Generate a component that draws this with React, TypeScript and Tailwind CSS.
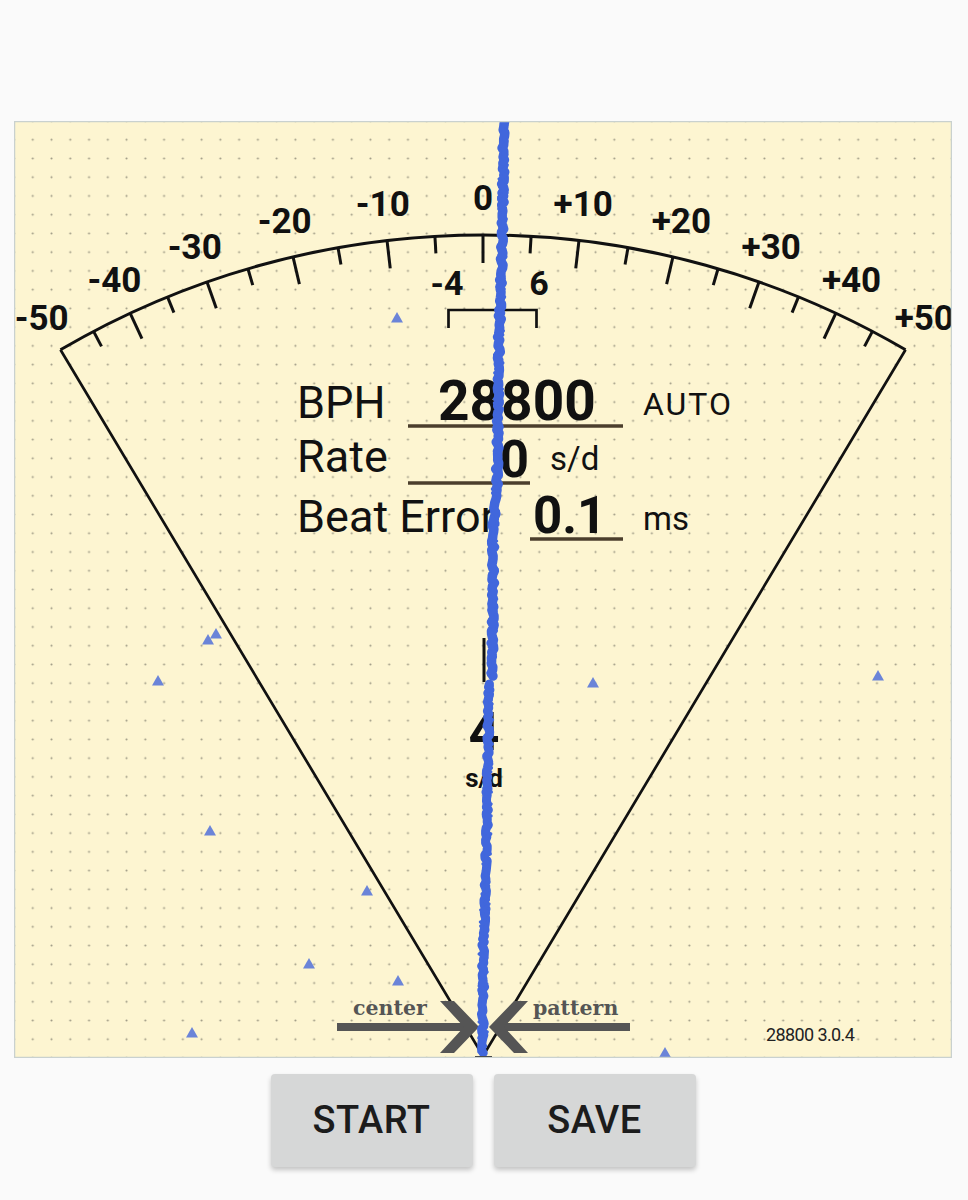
import React from "react";

const CX = 483;
const CY = 1070;
const R = 835;
const RL = 872;
const ANG = [0, 3.3, 6.6, 10.0, 13.15, 16.35, 19.3, 22.2, 25.0, 27.8, 30.4];

function pt(sign: number, deg: number, r: number) {
  const t = (deg * Math.PI) / 180;
  return { x: CX + sign * r * Math.sin(t), y: CY - r * Math.cos(t) };
}

function rnd(i: number) {
  const v = Math.sin(i * 12.9898 + 78.233) * 43758.5453;
  return v - Math.floor(v);
}

const BASE: [number, number][] = [
  [121, 504],
  [250, 502],
  [340, 499],
  [420, 498],
  [480, 497],
  [540, 493],
  [600, 493],
  [676, 492],
  [681, 489],
  [760, 488],
  [820, 487],
  [900, 485],
  [960, 483],
  [1056, 483],
];

function baseX(y: number) {
  for (let i = 0; i < BASE.length - 1; i++) {
    const [y0, x0] = BASE[i];
    const [y1, x1] = BASE[i + 1];
    if (y >= y0 && y <= y1) {
      const t = (y - y0) / (y1 - y0 || 1);
      return x0 + (x1 - x0) * t;
    }
  }
  return 483;
}

function tracePath(y0: number, y1: number, seed: number, amp: number, step: number) {
  let d = "";
  let i = 0;
  for (let y = y0; y <= y1; y += step) {
    const x = baseX(y) + (rnd(i + seed) - 0.5) * amp;
    d += (i === 0 ? "M" : "L") + x.toFixed(1) + " " + y.toFixed(1) + " ";
    i++;
  }
  return d;
}

const TRIS: [number, number][] = [
  [397, 318],
  [208, 640],
  [216, 634],
  [158, 681],
  [593, 683],
  [878, 676],
  [210, 831],
  [367, 891],
  [309, 964],
  [398, 981],
  [192, 1033],
  [665, 1053],
];

function Gauge() {
  const ticks: { x1: number; y1: number; x2: number; y2: number }[] = [];
  for (const s of [-1, 1]) {
    for (let k = s < 0 ? 0 : 1; k <= 9; k++) {
      const len = k % 2 === 0 ? 28 : 17;
      const a = pt(s, ANG[k], R);
      const b = pt(s, ANG[k], R - len);
      ticks.push({ x1: a.x, y1: a.y, x2: b.x, y2: b.y });
    }
  }
  const labels: { x: number; y: number; t: string }[] = [];
  labels.push({ ...pt(1, 0, RL), t: "0" });
  for (let k = 2; k <= 10; k += 2) {
    const l = pt(-1, ANG[k], RL);
    const r = pt(1, ANG[k], RL);
    labels.push({ ...l, t: "-" + k * 5 });
    labels.push({ ...r, t: "+" + k * 5 });
  }
  const cl = pt(-1, 30.4, R);
  const cr = pt(1, 30.4, R);

  const font = "Roboto, 'Liberation Sans', sans-serif";

  return (
    <svg width={938} height={937} viewBox="14 121 938 937" className="block">
      <defs>
        <pattern
          id="dots"
          x={14 - 9.38}
          y={121 - 9.38}
          width={18.76}
          height={18.74}
          patternUnits="userSpaceOnUse"
        >
          <circle cx={9.38} cy={9.37} r={1.05} fill="#9f9b86" />
        </pattern>
        <clipPath id="clip">
          <rect x={14} y={121} width={938} height={937} />
        </clipPath>
      </defs>
      <rect x={14} y={121} width={938} height={937} fill="#fdf5d1" />
      <rect x={14} y={121} width={938} height={937} fill="url(#dots)" />
      <g clipPath="url(#clip)">
        <path
          d={`M${cl.x} ${cl.y} A ${R} ${R} 0 0 1 ${cr.x} ${cr.y}`}
          fill="none"
          stroke="#111"
          strokeWidth={3}
        />
        <path
          d={`M${cl.x} ${cl.y} L483 1056 L${cr.x} ${cr.y}`}
          fill="none"
          stroke="#111"
          strokeWidth={2.7}
          strokeLinejoin="miter"
        />
        {ticks.map((t, i) => (
          <line key={i} x1={t.x1} y1={t.y1} x2={t.x2} y2={t.y2} stroke="#111" strokeWidth={3} />
        ))}
        {labels.map((l, i) => (
          <text
            key={i}
            x={l.x}
            y={l.y + 12}
            textAnchor="middle"
            fontFamily={font}
            fontWeight={700}
            fontSize={35}
            fill="#111"
          >
            {l.t}
          </text>
        ))}
        <text x={447} y={295} textAnchor="middle" fontFamily={font} fontWeight={700} fontSize={34} fill="#111">
          -4
        </text>
        <text x={539} y={295} textAnchor="middle" fontFamily={font} fontWeight={700} fontSize={34} fill="#111">
          6
        </text>
        <path d="M448.5 328 L448.5 310 L536.5 310 L536.5 328" fill="none" stroke="#111" strokeWidth={2.7} />

        <g fontFamily={font} fill="#111">
          <text x={297} y={418} fontSize={45}>BPH</text>
          <text x={438} y={420} fontSize={55} fontWeight={700}>28800</text>
          <line x1={408} y1={426} x2={623} y2={426} stroke="#4b3e2c" strokeWidth={3.5} />
          <text x={643} y={415} fontSize={32} letterSpacing={2}>AUTO</text>

          <text x={297} y={472} fontSize={45}>Rate</text>
          <text x={529} y={477} fontSize={51} fontWeight={700} textAnchor="end">0</text>
          <line x1={408} y1={483} x2={530} y2={483} stroke="#4b3e2c" strokeWidth={3.5} />
          <text x={550} y={470} fontSize={33}>s/d</text>

          <text x={297} y={532} fontSize={45}>Beat Error</text>
          <text x={533} y={533} fontSize={51} fontWeight={700}>0.1</text>
          <line x1={530} y1={539} x2={623} y2={539} stroke="#4b3e2c" strokeWidth={3.5} />
          <text x={643} y={530} fontSize={33}>ms</text>
        </g>

        <line x1={484} y1={638} x2={484} y2={682} stroke="#111" strokeWidth={3} />
        <text x={484} y={750} textAnchor="middle" fontFamily={font} fontWeight={700} fontSize={54} fill="#111">
          4
        </text>
        <text x={484} y={787} textAnchor="middle" fontFamily={font} fontWeight={700} fontSize={26} fill="#111">
          s/d
        </text>

        {TRIS.map(([x, y], i) => (
          <path key={i} d={`M${x} ${y - 6} L${x + 6} ${y + 4.5} L${x - 6} ${y + 4.5} Z`} fill="#6b84d8" />
        ))}

        <g fill="#555" stroke="#555">
          <line x1={337} y1={1027} x2={470} y2={1027} strokeWidth={8} />
          <path d="M440 1001 L454 1001 L479 1027 L454 1053 L440 1053 L464 1027 Z" stroke="none" />
          <line x1={630} y1={1027} x2={500} y2={1027} strokeWidth={8} />
          <path d="M528 1001 L514 1001 L489 1027 L514 1053 L528 1053 L504 1027 Z" stroke="none" />
        </g>
        <text x={353} y={1015} fontFamily="'DejaVu Serif', 'Liberation Serif', serif" fontSize={20.5} fontWeight={700} fill="#555">
          center
        </text>
        <text x={533} y={1015} fontFamily="'DejaVu Serif', 'Liberation Serif', serif" fontSize={20.5} fontWeight={700} fill="#555">
          pattern
        </text>
        <text x={766} y={1041} fontFamily={font} fontSize={18} letterSpacing={-0.6} fill="#222">
          28800 3.0.4
        </text>

        <g fill="none" stroke="#4167dc" strokeLinecap="round" strokeLinejoin="round">
          <path d={tracePath(121, 676, 1, 3, 3)} strokeWidth={9.5} />
          <path d={tracePath(123, 676, 500, 8, 2)} strokeWidth={3.5} />
          <path d={tracePath(684, 1054, 900, 3, 3)} strokeWidth={9} />
          <path d={tracePath(686, 1054, 1500, 8, 2)} strokeWidth={3.5} />
        </g>
        <line x1={475} y1={1057} x2={492} y2={1057} stroke="#222" strokeWidth={2} />
      </g>
      <rect x={14.5} y={121.5} width={937} height={936} fill="none" stroke="#c9d1cf" strokeWidth={1.5} />
    </svg>
  );
}

export default function App() {
  return (
    <div className="min-h-[1200px] w-[968px] bg-[#fafafa] pt-[121px]">
      <div className="ml-[14px] w-[938px]">
        <Gauge />
      </div>
      <div className="mt-[16px] flex justify-center gap-[21px] pr-[2px]">
        <button className="h-[93px] w-[202px] rounded-[4px] bg-[#d6d7d7] font-['Roboto'] text-[38px] font-medium tracking-[0.5px] text-[#1c1c1c] shadow-[0_3px_5px_rgba(0,0,0,0.22)]">
          START
        </button>
        <button className="h-[93px] w-[202px] rounded-[4px] bg-[#d6d7d7] font-['Roboto'] text-[38px] font-medium tracking-[0.5px] text-[#1c1c1c] shadow-[0_3px_5px_rgba(0,0,0,0.22)]">
          SAVE
        </button>
      </div>
    </div>
  );
}
